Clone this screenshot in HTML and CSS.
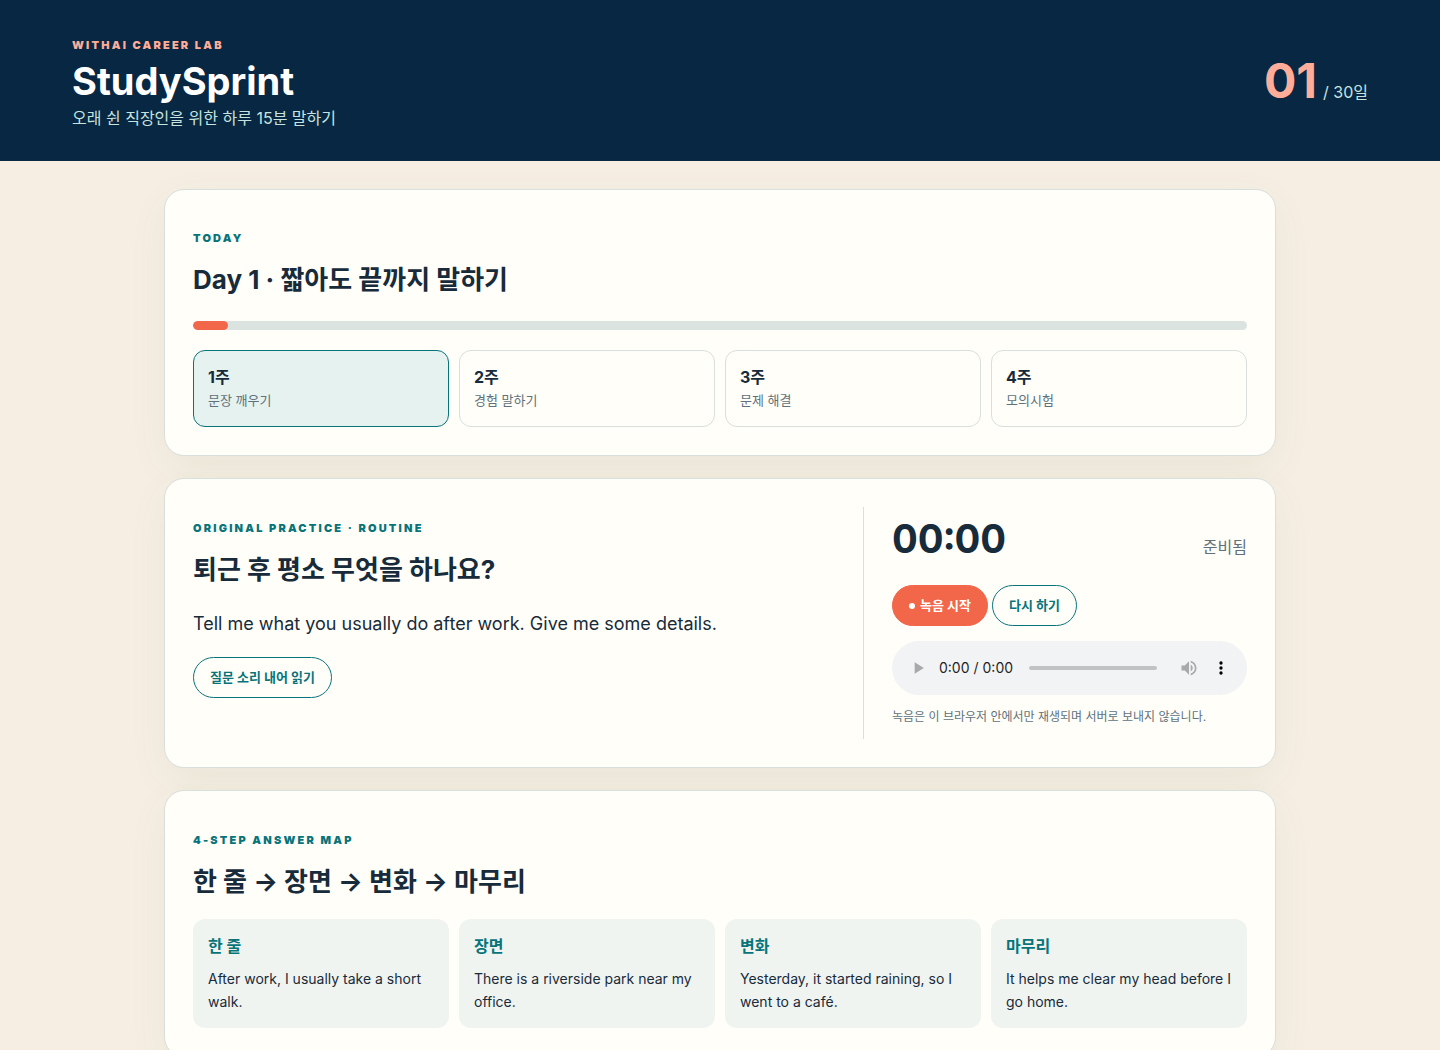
FILE: index.html
```html
<!DOCTYPE html>
<html lang="ko">
<head>
<meta charset="utf-8">
<meta name="viewport" content="width=device-width, initial-scale=1">
<title>StudySprint</title>
<link rel="stylesheet" href="styles.css">
</head>
<body>
<header class="site-header">
  <div class="brand">
    <p class="eyebrow eyebrow-light">WITHAI CAREER LAB</p>
    <h1>StudySprint</h1>
    <p class="tagline">오래 쉰 직장인을 위한 하루 15분 말하기</p>
  </div>
  <div class="day-count"><strong>01</strong><span>/ 30일</span></div>
</header>
<main class="page">
  <section class="card">
    <p class="eyebrow">TODAY</p>
    <h2>Day 1 · 짧아도 끝까지 말하기</h2>
    <div class="progress"><div class="progress-fill" style="width: 3.33%"></div></div>
    <div class="grid">
      <div class="week week-active"><strong>1주</strong><span>문장 깨우기</span></div>
      <div class="week"><strong>2주</strong><span>경험 말하기</span></div>
      <div class="week"><strong>3주</strong><span>문제 해결</span></div>
      <div class="week"><strong>4주</strong><span>모의시험</span></div>
    </div>
  </section>
  <section class="card practice">
    <div class="question">
      <p class="eyebrow">ORIGINAL PRACTICE · ROUTINE</p>
      <h2>퇴근 후 평소 무엇을 하나요?</h2>
      <p class="prompt" lang="en">Tell me what you usually do after work. Give me some details.</p>
      <button type="button" class="btn">질문 소리 내어 읽기</button>
    </div>
    <div class="recorder">
      <div class="timer-row"><strong class="timer">00:00</strong><span class="status">준비됨</span></div>
      <div class="actions">
        <button type="button" class="btn btn-record"><span class="dot"></span>녹음 시작</button>
        <button type="button" class="btn">다시 하기</button>
      </div>
      <audio class="player" controls></audio>
      <p class="note">녹음은 이 브라우저 안에서만 재생되며 서버로 보내지 않습니다.</p>
    </div>
  </section>
  <section class="card answer-map">
    <p class="eyebrow">4-STEP ANSWER MAP</p>
    <h2>한 줄 → 장면 → 변화 → 마무리</h2>
    <div class="grid">
      <div class="step"><h3>한 줄</h3><p lang="en">After work, I usually take a short walk.</p></div>
      <div class="step"><h3>장면</h3><p lang="en">There is a riverside park near my office.</p></div>
      <div class="step"><h3>변화</h3><p lang="en">Yesterday, it started raining, so I went to a café.</p></div>
      <div class="step"><h3>마무리</h3><p lang="en">It helps me clear my head before I go home.</p></div>
    </div>
  </section>
</main>
</body>
</html>
```
FILE: styles.css
```css
:root {
  --ink: #182b3a;
  --navy: #082743;
  --teal: #08747a;
  --coral: #f26649;
  --peach: #ffad99;
  --mint: #c7e3df;
  --muted: #60717b;
  --line: #d8dfdc;
  --paper: #fffef9;
  --sand: #f6eee3;
}

* {
  box-sizing: border-box;
}

body {
  margin: 0;
  background: var(--sand);
  color: var(--ink);
  font-family: Inter, "Noto Sans CJK KR", sans-serif;
  font-size: 16px;
  line-height: 24px;
}

h1, h2, h3, p {
  margin: 0;
}

.site-header {
  display: flex;
  align-items: center;
  justify-content: space-between;
  padding: 36px 5% 32px;
  background: var(--navy);
}

.eyebrow {
  color: var(--teal);
  font-size: 11px;
  font-weight: 900;
  letter-spacing: 0.2em;
  line-height: 18px;
}

.eyebrow-light {
  color: var(--peach);
}

h1 {
  color: #fff;
  font-size: 38px;
  font-weight: 700;
  line-height: 54px;
}

.tagline {
  color: var(--mint);
  font-size: 16px;
  line-height: 21px;
}

.day-count {
  display: flex;
  align-items: baseline;
  gap: 6px;
  padding-bottom: 4px;
  color: var(--mint);
}

.day-count strong {
  color: var(--peach);
  font-size: 48px;
  line-height: 56px;
}

.page {
  display: grid;
  gap: 22px;
  width: min(1112px, 100% - 32px);
  margin: 0 auto;
  padding: 28px 0 60px;
}

.card {
  padding: 39px 28px 28px;
  background: var(--paper);
  border: 1px solid var(--line);
  border-radius: 20px;
  box-shadow: 0 12px 40px rgba(48, 104, 48, 0.06);
}

h2 {
  margin-top: 12px;
  font-size: 26px;
  font-weight: 700;
  line-height: 42px;
}

.progress {
  height: 9px;
  margin: 20px 0;
  overflow: hidden;
  background: #dae3e0;
  border-radius: 9px;
}

.progress-fill {
  height: 100%;
  background: var(--coral);
  border-radius: 9px;
}

.grid {
  display: grid;
  grid-template-columns: repeat(4, 1fr);
  gap: 10px;
}

.week {
  display: grid;
  padding: 14px 14px 15px;
  border: 1px solid var(--line);
  border-radius: 12px;
}

.week strong {
  line-height: 25px;
}

.week span {
  color: var(--muted);
  font-size: 13px;
  line-height: 21px;
}

.week-active {
  background: #e6f2f0;
  border-color: var(--teal);
}

.practice {
  display: grid;
  grid-template-columns: 1fr 384px;
  gap: 28px;
  padding-top: 28px;
}

.question {
  padding-top: 12px;
}

.prompt {
  margin: 18px 0;
  font-size: 18px;
  line-height: 30px;
}

.btn {
  padding: 0 16px;
  background: transparent;
  border: 1px solid var(--teal);
  border-radius: 21px;
  color: var(--teal);
  font: inherit;
  font-size: 13px;
  font-weight: 700;
  line-height: 39px;
}

.btn-record {
  display: flex;
  align-items: center;
  gap: 5px;
  background: var(--coral);
  border-color: var(--coral);
  color: #fff;
}

.dot {
  width: 6px;
  height: 6px;
  background: currentColor;
  border-radius: 50%;
}

.recorder {
  padding-left: 28px;
  border-left: 1px solid var(--line);
}

.timer-row {
  display: flex;
  align-items: baseline;
  justify-content: space-between;
}

.timer {
  font-size: 40px;
  font-variant-numeric: tabular-nums;
  line-height: 64px;
}

.status {
  color: var(--muted);
}

.actions {
  display: flex;
  gap: 4px;
  margin-top: 14px;
}

.player {
  display: block;
  width: 100%;
  height: 54px;
  margin: 15px 0 12px;
}

.player::-webkit-media-controls-current-time-display,
.player::-webkit-media-controls-time-remaining-display {
  font-family: Inter, sans-serif;
}

.note {
  padding-bottom: 12px;
  color: var(--muted);
  font-size: 12px;
  line-height: 20px;
}

.step {
  padding: 14px 15px 15px;
  background: #f0f4f1;
  border-radius: 12px;
}

.answer-map {
  padding-top: 40px;
}

.answer-map h2 {
  margin-bottom: 16px;
}

h3 {
  color: var(--teal);
  font-size: 16px;
  line-height: 26px;
}

.step p {
  margin-top: 8px;
  font-size: 14px;
  line-height: 23px;
}
```
